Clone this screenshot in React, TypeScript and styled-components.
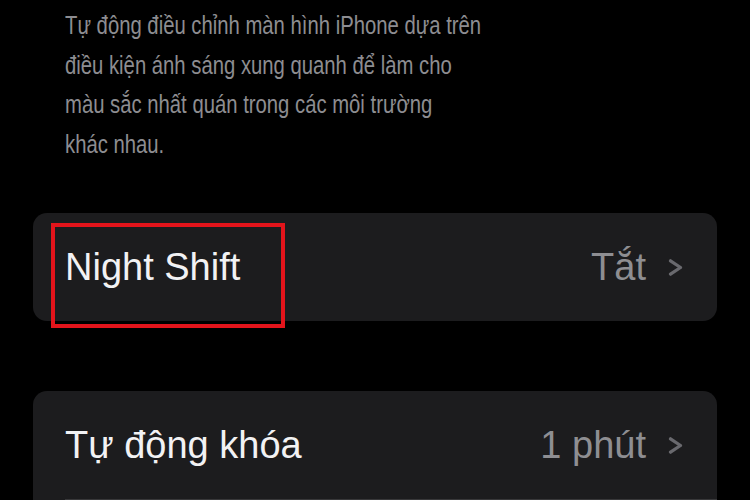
import styled, { createGlobalStyle } from 'styled-components';

type Setting = {
  label: string;
  value: string;
};

const description = [
  'Tự động điều chỉnh màn hình iPhone dựa trên',
  'điều kiện ánh sáng xung quanh để làm cho',
  'màu sắc nhất quán trong các môi trường',
  'khác nhau.',
];

const lockGroup: Setting[] = [{ label: 'Tự động khóa', value: '1 phút' }];

const Chevron = (): React.ReactElement => (
  <ChevronIcon viewBox="0 0 15 17" width="15" height="17">
    <polyline points="2.5,1.8 12.5,8.5 2.5,15.2" />
  </ChevronIcon>
);

const Row = ({ label, value }: Setting): React.ReactElement => (
  <RowBox>
    <Label>{label}</Label>
    <Value>
      {value}
      <Chevron />
    </Value>
  </RowBox>
);

export const App = (): React.ReactElement => {
  return (
    <>
      <GlobalStyle />
      <Page>
        <Footer>
          {description.map((line, i) => (
            <span key={i}>{line}</span>
          ))}
        </Footer>
        <Card>
          <Row label="Night Shift" value="Tắt" />
          <Highlight />
        </Card>
        <Card $spaced>
          {lockGroup.map((s) => (
            <Row key={s.label} {...s} />
          ))}
          <Divider />
          <RowBox />
        </Card>
      </Page>
    </>
  );
};

const GlobalStyle = createGlobalStyle`
  html, body {
    margin: 0;
    background: #000;
    overflow: hidden;
  }
`;

const Page = styled.div`
  width: 750px;
  height: 500px;
  padding: 6px 33px 0;
  box-sizing: border-box;
  font-family: 'Liberation Sans', Arial, sans-serif;
`;

/* the iOS footer face is narrower than Arial, so squeeze it */
const Footer = styled.p`
  margin: 0 0 49px;
  padding-left: 32px;
  display: flex;
  flex-direction: column;
  font-size: 26px;
  line-height: 39.5px;
  color: #8d8d91;
  white-space: nowrap;
  transform: scaleX(0.78);
  transform-origin: 32px 0;
`;

const Card = styled.div<{ $spaced?: boolean }>`
  position: relative;
  margin-top: ${(p) => (p.$spaced ? '70px' : '0')};
  background: #1c1c1e;
  border-radius: 14px;
`;

const RowBox = styled.div`
  height: 108px;
  padding: 0 34px 0 32px;
  display: flex;
  align-items: center;
  justify-content: space-between;
  font-size: 38px;
`;

const Label = styled.span`
  color: #f2f2f4;
`;

const Value = styled.span`
  display: flex;
  align-items: center;
  gap: 22px;
  color: #8e8e92;
`;

const ChevronIcon = styled.svg`
  fill: none;
  stroke: #69696e;
  stroke-width: 3.2;
  stroke-linecap: round;
  stroke-linejoin: round;
`;

const Divider = styled.div`
  height: 1px;
  margin-left: 32px;
  background: #38383a;
`;

const Highlight = styled.div`
  position: absolute;
  left: 18px;
  top: 10px;
  width: 234px;
  height: 105px;
  border: 4px solid #e3141b;
  box-sizing: border-box;
  pointer-events: none;
`;

export default App;
